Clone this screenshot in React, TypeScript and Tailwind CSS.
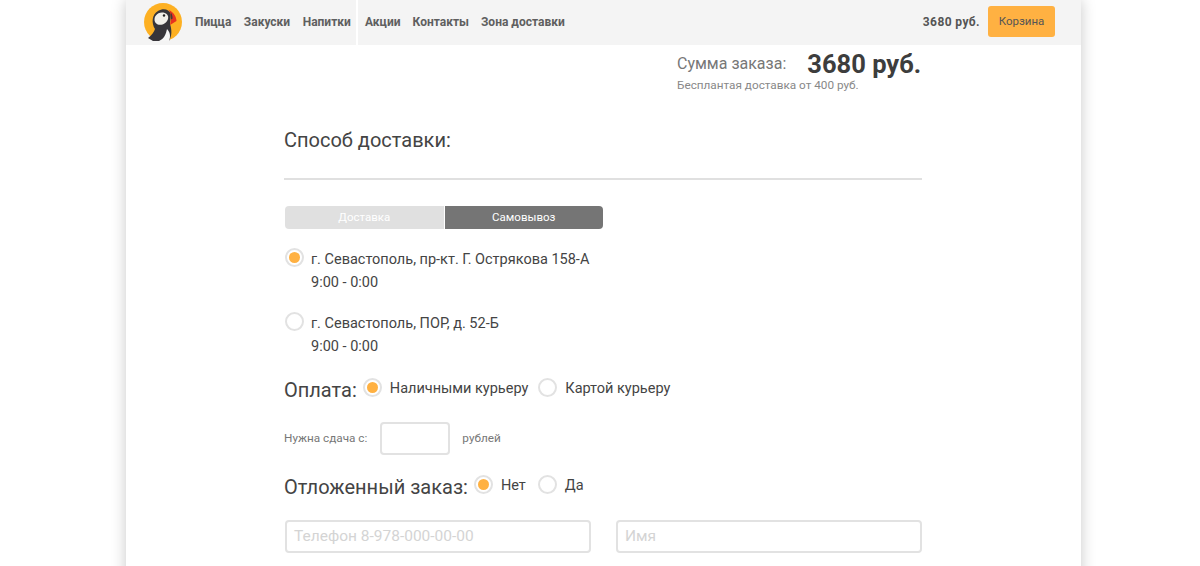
import * as React from 'react';

const font = { fontFamily: 'Roboto, "Liberation Sans", sans-serif' };

function Logo() {
  return (
    <svg width="38" height="38" viewBox="0 0 38 38" className="shrink-0">
      <circle cx="19" cy="19" r="19" fill="#fdb022" />
      <path d="M4 35 C8 32 10 29 11 26 C7 20 8 11 14 8 C19 5 25 6 27 11 L26 21 C28 27 28 33 25 38 L9 38 Z" fill="#37353a" />
      <path d="M11 19 C9 14 13 9.5 18 9.5 C22 9.5 25 12 24 16 C22 22 14 24 11 19 Z" fill="#f1efe9" />
      <path d="M23 26 C26 29 27 33 25 38 L15 38 C20 36 22 31 23 26 Z" fill="#f6f6f6" />
      <path d="M25 7 C30 9.5 32.5 14 32.5 18 L26 22 C27.5 17 27.5 12 25 7 Z" fill="#e8321f" />
      <path d="M26.5 9 C28 11 28.6 13 28.6 15.5 L27 16.5 C27.2 14 27.2 11.5 26.5 9 Z" fill="#3a3a3a" />
      <circle cx="20" cy="12.5" r="1.2" fill="#222" />
    </svg>
  );
}

function Radio({ checked = false, className = '' }: { checked?: boolean; className?: string }) {
  return (
    <span className={`flex h-[19px] w-[19px] shrink-0 items-center justify-center rounded-full border-2 border-[#e2e2e2] bg-white ${className}`}>
      {checked && <span className="h-[11px] w-[11px] rounded-full bg-[#ffb142]" />}
    </span>
  );
}

function TextField({ placeholder, width }: { placeholder: string; width: string }) {
  return (
    <div className={`flex h-[33px] items-center rounded-[4px] border-2 border-[#e2e2e2] pl-[7px] text-[15.5px] text-[#d4d4d4] ${width}`}>
      {placeholder}
    </div>
  );
}

export default function App() {
  const leftMenu = ['Пицца', 'Закуски', 'Напитки'];
  const rightMenu = ['Акции', 'Контакты', 'Зона доставки'];

  return (
    <div className="h-[566px] overflow-hidden whitespace-nowrap bg-white" style={font}>
      <div className="ml-[126px] h-[600px] w-[955px] bg-white shadow-[0_0_14px_rgba(0,0,0,0.22)]">
        <header className="flex h-[45px] items-center bg-[#f4f4f4] pb-[2px] text-[12px] font-bold text-[#5f5f5f]">
          <div className="ml-[18px] mr-[13px]">
            <Logo />
          </div>
          <nav className="-mb-[2px] flex w-[163px] items-center gap-[12.5px] self-stretch border-r-2 border-white pb-[2px]">
            {leftMenu.map((item) => (
              <span key={item}>{item}</span>
            ))}
          </nav>
          <nav className="ml-[7px] flex items-center gap-[12px]">
            {rightMenu.map((item) => (
              <span key={item}>{item}</span>
            ))}
          </nav>
          <span className="ml-auto mr-[8px] tracking-[0.4px] text-[#555]">3680 руб.</span>
          <span className="mr-[26px] flex h-[31px] w-[67px] items-center justify-center rounded-[3px] bg-[#ffb142] text-[11.5px] font-normal text-[#555]">
            Корзина
          </span>
        </header>

        <main className="ml-[158px] w-[638px]">
          <div className="ml-[393px] flex h-[38px] items-center">
            <span className="text-[16px] text-[#777]">Сумма заказа:</span>
            <span className="ml-[21px] text-[25.5px] font-bold text-[#3d3d3d]">3680 руб.</span>
          </div>
          <div className="ml-[393px] -mt-[6px] text-[11.75px] leading-[16px] text-[#888]">Бесплантая доставка от 400 руб.</div>

          <h2 className="mt-[32px] text-[20px] leading-[30px] text-[#444]">Способ доставки:</h2>
          <div className="mt-[23px] h-[2px] bg-[#e0e0e0]" />

          <div className="ml-px mt-[26px] flex h-[23px] w-[318px] text-[11.5px]">
            <div className="flex flex-1 items-center justify-center rounded-l-[4px] bg-[#e0e0e0] text-white">Доставка</div>
            <div className="ml-px flex flex-1 items-center justify-center rounded-r-[4px] bg-[#757575] text-white">Самовывоз</div>
          </div>

          <div className="ml-px mt-[19px] flex h-[46px] gap-[7px] text-[14.5px] leading-[22.5px] text-[#444]">
            <Radio checked />
            <div className="pt-[1px]">
              г. Севастополь, пр-кт. Г. Острякова 158-А
              <br />
              9:00 - 0:00
            </div>
          </div>
          <div className="ml-px mt-[18px] flex h-[46px] gap-[7px] text-[14.5px] leading-[22.5px] text-[#444]">
            <Radio />
            <div className="pt-[1px]">
              г. Севастополь, ПОР, д. 52-Б
              <br />
              9:00 - 0:00
            </div>
          </div>

          <div className="mt-[15px] flex h-[32px] items-center text-[14.5px] text-[#444]">
            <span className="mr-[6px] mt-[1px] text-[20px]">Оплата:</span>
            <Radio checked className="-mt-[4px]" />
            <span className="ml-[8px] mr-[10px]">Наличными курьеру</span>
            <Radio className="-mt-[4px]" />
            <span className="ml-[8px]">Картой курьеру</span>
          </div>

          <div className="mt-[17px] flex items-center text-[11.75px] text-[#777]">
            <span>Нужна сдача с:</span>
            <div className="ml-[13px] h-[33px] w-[70px] rounded-[4px] border-2 border-[#e2e2e2]" />
            <span className="ml-[12px]">рублей</span>
          </div>

          <div className="mt-[15px] flex h-[32px] items-center text-[14.5px] text-[#444]">
            <span className="mr-[6px] mt-[1px] text-[20px]">Отложенный заказ:</span>
            <Radio checked className="-mt-[4px]" />
            <span className="ml-[8px] mr-[12px]">Нет</span>
            <Radio className="-mt-[4px]" />
            <span className="ml-[8px]">Да</span>
          </div>

          <div className="ml-px mt-[18px] flex gap-[25px]">
            <TextField placeholder="Телефон 8-978-000-00-00" width="w-[306px]" />
            <TextField placeholder="Имя" width="w-[306px]" />
          </div>
        </main>
      </div>
    </div>
  );
}
